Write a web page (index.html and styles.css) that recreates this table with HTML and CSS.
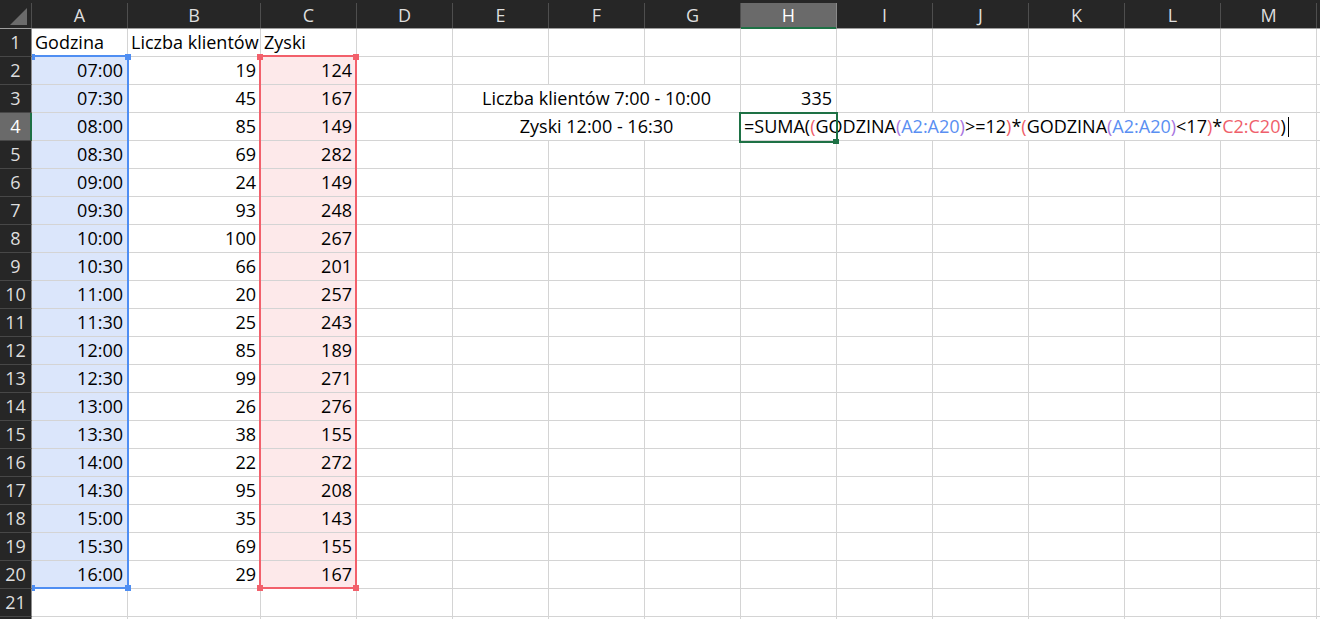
FILE: index.html
```html
<!DOCTYPE html>
<html lang="pl">
<head>
<meta charset="utf-8">
<title>Arkusz</title>
<link rel="stylesheet" href="styles.css">
</head>
<body>
<div class="sheet">
  <div class="colhead">
    <div class="corner"><svg width="32" height="25" viewBox="0 0 32 25"><polygon points="27,5 10,22 27,22" fill="#6b6b6b"/></svg></div>
    <div class="ch">A</div><div class="ch b">B</div><div class="ch">C</div><div class="ch">D</div><div class="ch">E</div><div class="ch">F</div><div class="ch">G</div><div class="ch on">H</div><div class="ch">I</div><div class="ch">J</div><div class="ch">K</div><div class="ch">L</div><div class="ch">M</div><div class="ch n"></div>
  </div>
  <div class="body">
    <div class="row"><div class="rh">1</div><div class="c">Godzina</div><div class="c b">Liczba klientów</div><div class="c">Zyski</div><div class="c"></div><div class="c"></div><div class="c"></div><div class="c"></div><div class="c"></div><div class="c"></div><div class="c"></div><div class="c"></div><div class="c"></div><div class="c"></div><div class="c n"></div></div>
    <div class="row"><div class="rh">2</div><div class="c r bl">07:00</div><div class="c b r">19</div><div class="c r rd">124</div><div class="c"></div><div class="c"></div><div class="c"></div><div class="c"></div><div class="c"></div><div class="c"></div><div class="c"></div><div class="c"></div><div class="c"></div><div class="c"></div><div class="c n"></div></div>
    <div class="row"><div class="rh">3</div><div class="c r bl">07:30</div><div class="c b r">45</div><div class="c r rd">167</div><div class="c"></div><div class="c m">Liczba klientów 7:00 - 10:00</div><div class="c r">335</div><div class="c"></div><div class="c"></div><div class="c"></div><div class="c"></div><div class="c"></div><div class="c n"></div></div>
    <div class="row"><div class="rh on">4</div><div class="c r bl">08:00</div><div class="c b r">85</div><div class="c r rd">149</div><div class="c"></div><div class="c m">Zyski 12:00 - 16:30</div><div class="c"></div><div class="c"></div><div class="c"></div><div class="c"></div><div class="c"></div><div class="c"></div><div class="c n"></div></div>
    <div class="row"><div class="rh">5</div><div class="c r bl">08:30</div><div class="c b r">69</div><div class="c r rd">282</div><div class="c"></div><div class="c"></div><div class="c"></div><div class="c"></div><div class="c"></div><div class="c"></div><div class="c"></div><div class="c"></div><div class="c"></div><div class="c"></div><div class="c n"></div></div>
    <div class="row"><div class="rh">6</div><div class="c r bl">09:00</div><div class="c b r">24</div><div class="c r rd">149</div><div class="c"></div><div class="c"></div><div class="c"></div><div class="c"></div><div class="c"></div><div class="c"></div><div class="c"></div><div class="c"></div><div class="c"></div><div class="c"></div><div class="c n"></div></div>
    <div class="row"><div class="rh">7</div><div class="c r bl">09:30</div><div class="c b r">93</div><div class="c r rd">248</div><div class="c"></div><div class="c"></div><div class="c"></div><div class="c"></div><div class="c"></div><div class="c"></div><div class="c"></div><div class="c"></div><div class="c"></div><div class="c"></div><div class="c n"></div></div>
    <div class="row"><div class="rh">8</div><div class="c r bl">10:00</div><div class="c b r">100</div><div class="c r rd">267</div><div class="c"></div><div class="c"></div><div class="c"></div><div class="c"></div><div class="c"></div><div class="c"></div><div class="c"></div><div class="c"></div><div class="c"></div><div class="c"></div><div class="c n"></div></div>
    <div class="row"><div class="rh">9</div><div class="c r bl">10:30</div><div class="c b r">66</div><div class="c r rd">201</div><div class="c"></div><div class="c"></div><div class="c"></div><div class="c"></div><div class="c"></div><div class="c"></div><div class="c"></div><div class="c"></div><div class="c"></div><div class="c"></div><div class="c n"></div></div>
    <div class="row"><div class="rh">10</div><div class="c r bl">11:00</div><div class="c b r">20</div><div class="c r rd">257</div><div class="c"></div><div class="c"></div><div class="c"></div><div class="c"></div><div class="c"></div><div class="c"></div><div class="c"></div><div class="c"></div><div class="c"></div><div class="c"></div><div class="c n"></div></div>
    <div class="row"><div class="rh">11</div><div class="c r bl">11:30</div><div class="c b r">25</div><div class="c r rd">243</div><div class="c"></div><div class="c"></div><div class="c"></div><div class="c"></div><div class="c"></div><div class="c"></div><div class="c"></div><div class="c"></div><div class="c"></div><div class="c"></div><div class="c n"></div></div>
    <div class="row"><div class="rh">12</div><div class="c r bl">12:00</div><div class="c b r">85</div><div class="c r rd">189</div><div class="c"></div><div class="c"></div><div class="c"></div><div class="c"></div><div class="c"></div><div class="c"></div><div class="c"></div><div class="c"></div><div class="c"></div><div class="c"></div><div class="c n"></div></div>
    <div class="row"><div class="rh">13</div><div class="c r bl">12:30</div><div class="c b r">99</div><div class="c r rd">271</div><div class="c"></div><div class="c"></div><div class="c"></div><div class="c"></div><div class="c"></div><div class="c"></div><div class="c"></div><div class="c"></div><div class="c"></div><div class="c"></div><div class="c n"></div></div>
    <div class="row"><div class="rh">14</div><div class="c r bl">13:00</div><div class="c b r">26</div><div class="c r rd">276</div><div class="c"></div><div class="c"></div><div class="c"></div><div class="c"></div><div class="c"></div><div class="c"></div><div class="c"></div><div class="c"></div><div class="c"></div><div class="c"></div><div class="c n"></div></div>
    <div class="row"><div class="rh">15</div><div class="c r bl">13:30</div><div class="c b r">38</div><div class="c r rd">155</div><div class="c"></div><div class="c"></div><div class="c"></div><div class="c"></div><div class="c"></div><div class="c"></div><div class="c"></div><div class="c"></div><div class="c"></div><div class="c"></div><div class="c n"></div></div>
    <div class="row"><div class="rh">16</div><div class="c r bl">14:00</div><div class="c b r">22</div><div class="c r rd">272</div><div class="c"></div><div class="c"></div><div class="c"></div><div class="c"></div><div class="c"></div><div class="c"></div><div class="c"></div><div class="c"></div><div class="c"></div><div class="c"></div><div class="c n"></div></div>
    <div class="row"><div class="rh">17</div><div class="c r bl">14:30</div><div class="c b r">95</div><div class="c r rd">208</div><div class="c"></div><div class="c"></div><div class="c"></div><div class="c"></div><div class="c"></div><div class="c"></div><div class="c"></div><div class="c"></div><div class="c"></div><div class="c"></div><div class="c n"></div></div>
    <div class="row"><div class="rh">18</div><div class="c r bl">15:00</div><div class="c b r">35</div><div class="c r rd">143</div><div class="c"></div><div class="c"></div><div class="c"></div><div class="c"></div><div class="c"></div><div class="c"></div><div class="c"></div><div class="c"></div><div class="c"></div><div class="c"></div><div class="c n"></div></div>
    <div class="row"><div class="rh">19</div><div class="c r bl">15:30</div><div class="c b r">69</div><div class="c r rd">155</div><div class="c"></div><div class="c"></div><div class="c"></div><div class="c"></div><div class="c"></div><div class="c"></div><div class="c"></div><div class="c"></div><div class="c"></div><div class="c"></div><div class="c n"></div></div>
    <div class="row"><div class="rh">20</div><div class="c r bl">16:00</div><div class="c b r">29</div><div class="c r rd">167</div><div class="c"></div><div class="c"></div><div class="c"></div><div class="c"></div><div class="c"></div><div class="c"></div><div class="c"></div><div class="c"></div><div class="c"></div><div class="c"></div><div class="c n"></div></div>
    <div class="row"><div class="rh">21</div><div class="c"></div><div class="c b"></div><div class="c"></div><div class="c"></div><div class="c"></div><div class="c"></div><div class="c"></div><div class="c"></div><div class="c"></div><div class="c"></div><div class="c"></div><div class="c"></div><div class="c"></div><div class="c n"></div></div>
    <div class="row"><div class="rh"></div><div class="c"></div><div class="c b"></div><div class="c"></div><div class="c"></div><div class="c"></div><div class="c"></div><div class="c"></div><div class="c"></div><div class="c"></div><div class="c"></div><div class="c"></div><div class="c"></div><div class="c"></div><div class="c n"></div></div>

    <div class="range blue"></div>
    <span class="hd blue-h h-btl"></span><span class="hd blue-h h-btr"></span><span class="hd blue-h h-bbl"></span><span class="hd blue-h h-bbr"></span>
    <div class="range red"></div>
    <span class="hd red-h h-rtl"></span><span class="hd red-h h-rtr"></span><span class="hd red-h h-rbl"></span><span class="hd red-h h-rbr"></span>

    <div class="edit">=SUMA(<span class="fr">(</span>GODZINA<span class="fp">(</span><span class="fb">A2:A20</span><span class="fp">)</span>&gt;=12<span class="fr">)</span>*<span class="fr">(</span>GODZINA<span class="fp">(</span><span class="fb">A2:A20</span><span class="fp">)</span>&lt;17<span class="fr">)</span>*<span class="fr">C2:C20</span>)<span class="caret"></span></div>
    <div class="active"></div>
    <span class="fill"></span>
  </div>
</div>
</body>
</html>
```
FILE: styles.css
```css
html, body {
  margin: 0;
  height: 100%;
  overflow: hidden;
  background: #fff;
}
body {
  font-family: "Open Sans", "Liberation Sans", sans-serif;
  font-size: 18px;
}
.sheet {
  width: 1320px;
  height: 619px;
  overflow: hidden;
  display: flex;
  flex-direction: column;
}
.colhead {
  display: flex;
  flex: none;
  height: 29px;
  box-sizing: border-box;
  padding-top: 3px;
  background: #262626;
  border-bottom: 1px solid #9e9e9e;
}
.colhead > div {
  flex: none;
  box-sizing: border-box;
  width: 96px;
  border-right: 1px solid #4e4e4e;
  color: #dedede;
  text-align: center;
  line-height: 25px;
}
.colhead > .corner {
  width: 32px;
}
.corner svg {
  display: block;
}
.colhead > .b { width: 133px; }
.colhead > .n { flex: 1 1 auto; width: auto; border-right: 0; }
.colhead > .on {
  height: 26px;
  background: #6a6a6a;
  color: #fff;
  border-right-color: #8a8a8a;
  box-shadow: inset 0 -2px 0 #1e7145;
}
.body {
  position: relative;
  flex: 1 1 auto;
  overflow: hidden;
}
.row {
  display: flex;
  height: 28px;
}
.rh {
  flex: none;
  box-sizing: border-box;
  width: 32px;
  background: #262626;
  color: #dedede;
  text-align: center;
  line-height: 27px;
  border-right: 1px solid #8e8e8e;
  border-bottom: 1px solid #474747;
}
.rh.on {
  background: #6a6a6a;
  color: #fff;
  border-right-color: #1e7145;
  box-shadow: inset -1px 0 0 #1e7145;
}
.c {
  flex: none;
  box-sizing: border-box;
  width: 96px;
  padding: 0 3px;
  border-right: 1px solid #d4d4d4;
  border-bottom: 1px solid #d4d4d4;
  line-height: 27px;
  white-space: nowrap;
  overflow: hidden;
  color: #000;
}
.c.b { width: 133px; }
.c.m { width: 288px; text-align: center; }
.c.n { flex: 1 1 auto; width: auto; border-right: 0; }
.c.r { text-align: right; padding-right: 4px; }
.bl { background: #dbe6fb; }
.rd { background: #fde9ea; }

.range {
  position: absolute;
  top: 26px;
  height: 534px;
  box-sizing: border-box;
  border: 2px solid;
}
.range.blue {
  left: 32px;
  width: 97px;
  border-color: #4f8ef2;
  border-left: 0;
}
.range.red {
  left: 259px;
  width: 98px;
  border-color: #f2606b;
}
.hd {
  position: absolute;
  width: 6px;
  height: 6px;
}
.blue-h { background: #4f8ef2; }
.red-h { background: #f2606b; }
.h-btl { left: 32px; top: 25px; width: 3px; }
.h-btr { left: 125px; top: 25px; }
.h-bbl { left: 32px; top: 556px; width: 3px; }
.h-bbr { left: 125px; top: 556px; }
.h-rtl { left: 257px; top: 25px; }
.h-rtr { left: 353px; top: 25px; }
.h-rbl { left: 257px; top: 556px; }
.h-rbr { left: 353px; top: 556px; }

.edit {
  position: absolute;
  left: 741px;
  top: 84px;
  height: 27px;
  padding: 0 6px 0 3px;
  background: #fff;
  line-height: 27px;
  white-space: nowrap;
  color: #000;
}
.fr { color: #ef5f6b; }
.fp { color: #a875e0; }
.fb { color: #5a8ff2; }
.caret {
  display: inline-block;
  width: 1px;
  height: 20px;
  margin-left: 2px;
  background: #000;
  vertical-align: -4px;
}
.active {
  position: absolute;
  left: 739px;
  top: 83px;
  width: 99px;
  height: 31px;
  box-sizing: border-box;
  border: 2px solid #1e7145;
}
.fill {
  position: absolute;
  left: 833px;
  top: 110px;
  width: 6px;
  height: 5px;
  background: #1e7145;
}
```
